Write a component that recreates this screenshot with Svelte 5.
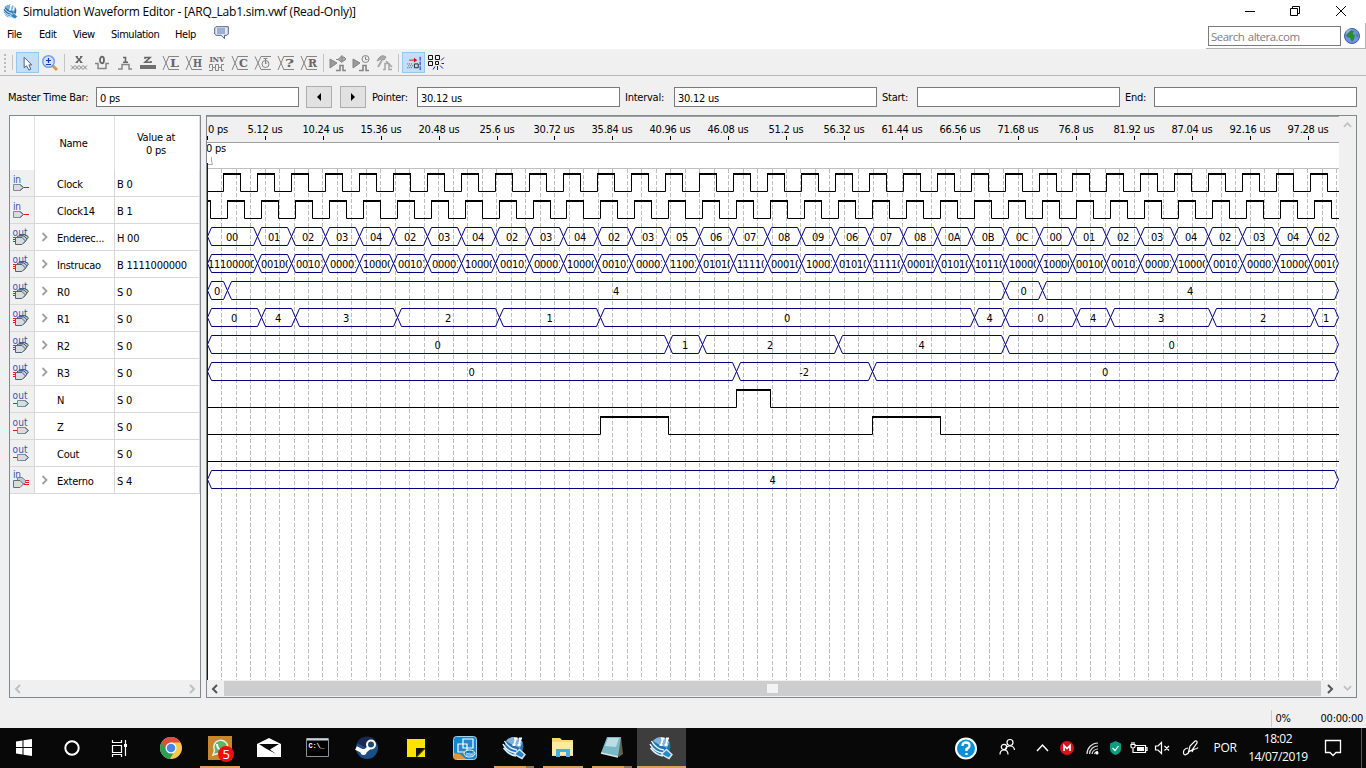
<script>
  const menus = [
    { t: 'File', w: 32 }, { t: 'Edit', w: 34 }, { t: 'View', w: 38 },
    { t: 'Simulation', w: 64 }, { t: 'Help', w: 38 }
  ];
  const tools = ['x', '0', '1', 'z', 'L', 'H', 'inv', 'C', 'clk', '?', 'R'];

  const signals = [
    { name: 'Clock', value: 'B 0', dir: 'in', bus: false },
    { name: 'Clock14', value: 'B 1', dir: 'in', bus: false },
    { name: 'Enderec...', value: 'H 00', dir: 'out', bus: true },
    { name: 'Instrucao', value: 'B 1111000000', dir: 'out', bus: true },
    { name: 'R0', value: 'S 0', dir: 'out', bus: true },
    { name: 'R1', value: 'S 0', dir: 'out', bus: true },
    { name: 'R2', value: 'S 0', dir: 'out', bus: true },
    { name: 'R3', value: 'S 0', dir: 'out', bus: true },
    { name: 'N', value: 'S 0', dir: 'out', bus: false },
    { name: 'Z', value: 'S 0', dir: 'out', bus: false },
    { name: 'Cout', value: 'S 0', dir: 'out', bus: false },
    { name: 'Externo', value: 'S 4', dir: 'in', bus: true }
  ];

  // The plot starts at X0 in time-axis pixels and ends at END.
  const X0 = 207;
  const END = 1338;

  const marks = ['0 ps', '5.12 us', '10.24 us', '15.36 us', '20.48 us', '25.6 us', '30.72 us', '35.84 us', '40.96 us', '46.08 us', '51.2 us', '56.32 us', '61.44 us', '66.56 us', '71.68 us', '76.8 us', '81.92 us', '87.04 us', '92.16 us', '97.28 us']
    .map((t, i) => ({ t, x: Math.floor(i * 57.94 + 0.3) }));

  const grid = Array.from({ length: 78 }, (_, i) => Math.floor((i + 1) * 14.485 + 0.1));

  const clockRise = Array.from({ length: 33 }, (_, k) => (k < 24 ? 223 + 34 * k : k === 24 ? 1039 : 1072 + 34 * (k - 25)));
  const clock14Rise = Array.from({ length: 33 }, (_, k) => (k < 10 ? 227 + 34 * k : 566 + 34 * (k - 10)));

  function digital(pulses, row) {
    const lo = row * 27 + 75.5;
    const hi = lo - 17.5;
    let d = `M0 ${lo}`;
    const highs = [];
    for (const [a, b] of pulses) {
      const l = a - X0 + 0.5;
      const r = Math.min(b, END + 4) - X0 + 0.5;
      d += `H${l}V${hi}H${r}V${lo}`;
      highs.push([l - 0.5, r + 0.5, hi]);
    }
    d += `H${END - X0 + 1}`;
    return { d, highs };
  }

  const digitals = [
    digital(clockRise.map((x) => [x, x + 17]), 0),
    digital([[205, 210], ...clock14Rise.map((x) => [x, x + 17])], 1),
    digital([[736, 770]], 8),
    digital([[600, 668], [872, 940]], 9),
    digital([], 10)
  ];

  const addresses = '00 01 02 03 04 02 03 04 02 03 04 02 03 05 06 07 08 09 06 07 08 0A 0B 0C 00 01 02 03 04 02 03 04 02'.split(' ');
  const codes = '11100000 00100 00101 00001 10000 00101 00001 10000 00101 00001 10000 00101 00001 11001 01010 11110 00010 10001 01010 11110 00010 01010 10110 10000 10000 00100 00101 00001 10000 00101 00001 10000 0010'.split(' ');

  const bounds = [X0, ...clockRise.slice(1), END];
  const segs = (edges, labels) => labels.map((t, i) => ({ a: edges[i], b: edges[i + 1], t }));

  const buses = [
    { row: 2, s: segs(bounds, addresses) },
    { row: 3, s: segs(bounds, codes), clip: true },
    { row: 4, s: segs([X0, 227, 1005, 1042, END], ['0', '4', '0', '4']) },
    { row: 5, s: segs([X0, 261, 295, 397, 499, 600, 974, 1005, 1076, 1110, 1212, 1314, END], ['0', '4', '3', '2', '1', '0', '4', '0', '4', '3', '2', '1']) },
    { row: 6, s: segs([X0, 668, 702, 838, 1005, END], ['0', '1', '2', '4', '0']) },
    { row: 7, s: segs([X0, 736, 872, END], ['0', '-2', '0']) },
    { row: 11, s: segs([X0, END], ['4']) }
  ];

  function hex(s, row) {
    const t = row * 27 + 57.5;
    const b = t + 18;
    const l = s.a - X0 + 0.5;
    const r = s.b - X0 + 0.5;
    return `M${l} ${t + 9}L${l + 4} ${t}H${r - 4}L${r} ${t + 9}L${r - 4} ${b}H${l + 4}Z`;
  }

  const apps = ['start', 'cortana', 'tasks', 'chrome', 'whats', 'mail', 'cmd', 'steam', 'note', 'intel', 'quartus', 'folder', 'notepad', 'quartus'];
  const running = [4, 10, 11, 12, 13];
  const tray = [['help', 40], ['people', 42], ['up', 28], ['mega', 24], ['wifi', 24], ['shield', 23], ['battery', 24], ['mute', 24], ['pen', 30]];
</script>

{#snippet quartus(size)}
  <svg width={size} height={size} viewBox="0 0 24 24">
    <circle cx="12" cy="10.500" r="9.500" fill="#2673b4" />
    <path d="M4 5A10 10 0 0 1 20.500 6L18 12 9 8Z" fill="#7fb3da" />
    <path d="M1 8Q5 16 14 17M1.500 12Q7 19 14 20M2.500 5Q7 13 15 14" stroke="#e8f3fb" stroke-width="1.500" fill="none" />
    <path d="M12 2.500H15.500M14 2.500L12 9M10.500 9H13.500M17 2.500H20M18.500 2.500L17 9M15.500 9H18.500" stroke="#fff" stroke-width="1.800" fill="none" />
    <path d="M12.500 18L17.500 13.500 23 18.500 20 22.500 16 20.500Z" fill="#2788c9" stroke="#dbe5ec" stroke-width="1.400" />
  </svg>
{/snippet}

{#snippet port(s)}
  <svg width="24" height="26" viewBox="0 0 24 26">
    {#if s.dir === 'in' && s.bus}
      <text x="3" y="11" class="io" textLength="8">in</text>
      <path d="M14 13.500H19M14 15.500H19M14 17.500H19" stroke="#e01818" />
      <path d="M7.500 10.500H12L15.500 13.500V16L12 18H7.500Z" fill="#bfcbd3" stroke="#6f8290" />
      <path d="M3.500 13.500H10L13.500 17 10 20.500H3.500Z" fill="#d9dcdd" stroke="#5d7180" />
    {:else if s.dir === 'in'}
      <text x="3" y="13" class="io" textLength="8">in</text>
      <path d="M14 17.500H19" stroke="#e01818" />
      <path d="M3.500 14.500H10L13.500 17.500 10 20.500H3.500Z" fill="#d9dcdd" stroke="#7d8b96" />
      <path d="M10 14.500L13.500 17.500 10 20.500" fill="none" stroke="#486477" />
    {:else if s.bus}
      <path d="M3 13.500H8M3 15.500H7M3 17.500H6" stroke="#e01818" />
      <path d="M9.500 10.500H15L18.500 13 15 17.500H9.500Z" fill="#b9c4cc" stroke="#4e6474" />
      <path d="M7.500 12H14L17 15 14 19H7.500Z" fill="#c9d0d5" stroke="#4e6474" />
      <path d="M5.500 13.500H12L15.500 17 12 20.500H5.500Z" fill="#d9dcdd" stroke="#4e6474" />
      <text x="2.500" y="12" class="io" textLength="15">out</text>
    {:else}
      <text x="2.500" y="13" class="io" textLength="15">out</text>
      <path d="M3 17.500H7" stroke="#e01818" />
      <path d="M7.500 14.500H15L18.500 17.500 15 20.500H7.500Z" fill="#d9dcdd" stroke="#7d8b96" />
      <path d="M15 14.500L18.500 17.500 15 20.500" fill="none" stroke="#486477" />
    {/if}
  </svg>
{/snippet}

{#snippet tool(k)}
  <svg width="20" height="20" viewBox="0 0 20 20" fill="none" stroke="#858585">
    {#if k === 'x'}
      <path d="M2 12.500L6 16.500M2 16.500L6 12.500L10 16.500L14 12.500L18 16.500M6 16.500L10 12.500L14 16.500L18 12.500" />
      <path d="M7.500 4L12.500 9.500M12.500 4L7.500 9.500" stroke="#666" stroke-width="1.700" />
      <path d="M6.500 3.500H9M11 3.500H13.500M6.500 9.500H9M11 9.500H13.500" stroke="#666" />
    {:else if k === '0'}
      <path d="M3 10.500H6V15.500H14V10.500H17" stroke-width="1.500" />
      <ellipse cx="10" cy="7" rx="2" ry="3.300" stroke="#666" stroke-width="1.800" />
    {:else if k === '1'}
      <path d="M3 16H7V11.500H14V16H17" stroke-width="1.500" />
      <path d="M8 4.500H10.500V9M8 9.200H13" stroke="#666" stroke-width="1.600" />
    {:else if k === 'z'}
      <path d="M2 14H18" stroke="#707070" stroke-width="4" />
      <path d="M7 6V4.500H12L7 9.300H13V8" stroke="#666" stroke-width="1.600" />
    {:else if k === 'inv'}
      <text x="2.500" y="9" class="glyph" font-size="8" textLength="15">INV</text>
      <path d="M2.500 15V11.500H5.500V14.500H8.500V11.500H11.500V14.500H14.500V11.500H17M2 17.500H5.500V14.500M8.500 14.500V17.500H11.500V14.500M14.500 14.500V17.500H17" />
    {:else if k === 'clk'}
      <path d="M2 3.500L8 16.500H18M2 16.500L8 3.500H18" />
      <circle cx="12.500" cy="11" r="3.500" /><path d="M10.500 5.500H14.500M12.500 5.500V11L14 9.500" />
    {:else if k === 'gate' || k === 'gatet'}
      <path d="M2 6L9 10 2 15Z" fill="#999" />
      <path d="M8 17.500H12V12.500H15V17.500H18" stroke-width="1.600" />
      {#if k === 'gate'}
        <path d="M8 6.500H10L14 2.500V9.500L10 6.500M14 4H16L18 6L16 8H14" fill="#aaa" />
      {:else}
        <circle cx="14.500" cy="6" r="3.500" fill="#eee" /><path d="M14.500 3.500V6.500H16.500" />
      {/if}
    {:else if k === 'hammer'}
      <path d="M3 8Q7 0 12 4L10 7 7 6Z" fill="#aaa" stroke="#999" />
      <path d="M8 7L4 14" stroke-width="2" stroke="#aaa" />
      <path d="M9 16.500H11V10.500H15V16.500H18M12 8L18 14" stroke="#a5a5a5" stroke-width="1.500" />
    {:else}
      <path d="M2 3L8 17M2 17L8 3M8 3.500H18M8 16.500H18" />
      <text x="9" y="14" class="glyph" font-size="11" textLength="9" lengthAdjust="spacingAndGlyphs">{k}</text>
    {/if}
  </svg>
{/snippet}

<div class="screen">
  <header class="titlebar">
    {@render quartus(16)}
    <span class="title">Simulation Waveform Editor - [ARQ_Lab1.sim.vwf (Read-Only)]</span>
    <svg class="winbtns" width="116" height="20" viewBox="0 0 116 20" fill="none" stroke="#000">
      <path d="M3 9.500H13" />
      <path d="M48.500 6.500H55.500V13.500H48.500ZM50.500 6V4.500H57.500V11.500H56" />
      <path d="M94 4L104 14M104 4L94 14" />
    </svg>
  </header>

  <div class="menubar">
    {#each menus as m}<span class="menu" style:width="{m.w}px">{m.t}</span>{/each}
    <svg class="chat" width="15" height="14" viewBox="0 0 15 14">
      <path d="M2 .700H14.300V8L13 9.300H10.500V12.500L7 9.300H2L.700 8V2Z" fill="#dfe8f8" stroke="#54657f" />
      <path d="M3 3H11M3 5H11M3 7H11" stroke="#5876a5" />
    </svg>
    <div class="searchbox">
      <div class="search">Search altera.com</div>
      <svg width="18" height="18" viewBox="0 0 18 18">
        <circle cx="8" cy="9" r="7.500" fill="#6f92e4" stroke="#3f5cab" />
        <circle cx="6" cy="6" r="4" fill="#a9c2f3" opacity=".6" />
        <path d="M2 8L4 6 7 3 10 4 9 7 11 8 10 12 8 15 6 11 3 10ZM12 6L14 8 13 11Z" fill="#2f8b33" />
      </svg>
    </div>
  </div>

  <div class="toolbar">
    <svg width="16" height="22" viewBox="0 0 16 22"><path d="M5 2V20" stroke="#bbb" stroke-width="2" stroke-dasharray="2 2" /><path d="M12.500 3V18" stroke="#c4c4c4" /></svg>
    <div class="cell on">
      <svg width="20" height="20" viewBox="0 0 20 20"><path d="M7 4.500V15.500L9.500 13.500 12 18 14 17 12 12.500H15Z" fill="#fff" stroke="#465a83" /></svg>
    </div>
    <div class="cell">
      <svg width="20" height="20" viewBox="0 0 20 20">
        <path d="M12.500 12.500L17 17" stroke="#d79a43" stroke-width="3" />
        <circle cx="8.500" cy="8.500" r="5.800" fill="#cfe3fb" stroke="#7ba0d8" stroke-width="1.500" />
        <path d="M6 7.500H11M8.500 5V10M6 11.500H11" stroke="#1634b5" stroke-width="1.200" />
      </svg>
    </div>
    <i class="sep"></i>
    {#each tools as k}<div class="cell">{@render tool(k)}</div>{/each}
    <i class="sep"></i>
    {#each ['gate', 'gatet', 'hammer'] as k}<div class="cell">{@render tool(k)}</div>{/each}
    <i class="sep"></i>
    <div class="cell on">
      <svg width="20" height="20" viewBox="0 0 20 20" fill="none" stroke="#222">
        <path d="M6 7.500H13" stroke="#e01010" /><path d="M11 5L14.500 7.500 11 10Z" fill="#e01010" stroke="none" />
        <path d="M4 11.500H10M5 13.500H10M4 15.500H10" stroke="#555" stroke-dasharray="1 1" /><path d="M11.500 11.500H15.500V15.500H11.500Z" />
        <path d="M17.500 4V18" stroke="#1010f0" stroke-dasharray="4 1" />
      </svg>
    </div>
    <div class="cell">
      <svg width="20" height="20" viewBox="0 0 20 20" fill="none" stroke="#111">
        <path d="M2.500 2.500H6.500V6.500H2.500ZM9.500 2.500H13.500V6.500H9.500ZM2.500 8.500H6.500V12.500H2.500ZM9.500 8.500H12.500V11.500H9.500Z" />
        <path d="M15 7.500L18 4.500M15.500 10.500H18M14 12.500L17 15.500M11.500 13V17M9 13.500L7 16.500" stroke="#1515e8" />
      </svg>
    </div>
  </div>

  <div class="fields">
    <label style:width="88px">Master Time Bar:</label><div class="field">0 ps</div>
    <div class="step s1"><svg width="6" height="8" viewBox="0 0 6 8"><path d="M5 0V8L1 4Z" /></svg></div>
    <div class="step s2"><svg width="6" height="8" viewBox="0 0 6 8"><path d="M1 0V8L5 4Z" /></svg></div>
    <label style:width="45px">Pointer:</label><div class="field">30.12 us</div>
    <label class="gap" style:width="49px">Interval:</label><div class="field">30.12 us</div>
    <label class="gap" style:width="35px">Start:</label><div class="field"></div>
    <label class="gap" style:width="29px">End:</label><div class="field"></div>
  </div>

  <main>
    <section class="names">
      <div class="head"><span></span><span>Name</span><span class="two">Value at<br />0 ps</span></div>
      {#each signals as s}
        <div class="row">
          <span class="ic">{@render port(s)}</span>
          <span class="nm">
            <svg width="8" height="10" viewBox="0 0 8 10">{#if s.bus}<path d="M1.500 1L5.500 5 1.500 9" fill="none" stroke="#a0a0a0" stroke-width="1.800" />{/if}</svg>
            {s.name}
          </span>
          <span class="vl">{s.value}</span>
        </div>
      {/each}
      <div class="hscroll dim">
        <svg width="8" height="10" viewBox="0 0 8 10"><path d="M6 1L2 5 6 9" /></svg>
        <svg width="8" height="10" viewBox="0 0 8 10"><path d="M2 1L6 5 2 9" /></svg>
      </div>
    </section>

    <section class="waves">
      <svg class="plot" width="1132" height="564" viewBox="0 0 1132 564">
        <defs>
          {#each buses[1].s as s, i}
            <clipPath id="c{i}"><rect x={s.a - X0 + 2} y="140" width={s.b - s.a - 5} height="16" /></clipPath>
          {/each}
        </defs>
        <rect width="1132" height="26" fill="#f0f0f0" />
        <path d="M0 .500H1132M0 26.500H1132" stroke="#a0a0a0" />
        <path d="M0 52.500H1132" stroke="#c0c0c0" />
        {#each marks as m, i}
          <text x={i ? m.x : 1} y="17" text-anchor={i ? 'middle' : 'start'}>{m.t}</text>
          <path d="M{m.x + 0.5} 20V24" stroke="#000" />
        {/each}
        <text x="-1" y="36">0 ps</text>
        <path d="M4.500 41V45L5.500 48.500H1" fill="none" stroke="#aaa" />
        {#each grid as x}
          <path d="M{x + 0.5} 53V564" stroke="#bdbdbd" stroke-dasharray="4 2" />
        {/each}
        {#each digitals as w}
          <path d={w.d} fill="none" stroke="#000" />
          {#each w.highs as h}<path d="M{h[0]} {h[2]}H{h[1]}" stroke="#000" stroke-width="2" />{/each}
        {/each}
        {#each buses as b}
          {#each b.s as s, i}
            <path d={hex(s, b.row)} fill="none" stroke="#000080" />
            {#if b.clip}
              <g clip-path="url(#c{i})"><text x={s.a - X0 + (i === 0 ? 1 : s.t.endsWith('1') ? 5 : 4)} y={b.row * 27 + 71} class="code">{s.t}</text></g>
            {:else}
              <text x={(s.a + s.b) / 2 - X0} y={b.row * 27 + 71} text-anchor="middle">{s.t}</text>
            {/if}
          {/each}
        {/each}
        <path d="M.500 47V564" stroke="#0000e0" />
      </svg>
      <div class="vscroll">
        <svg width="9" height="8" viewBox="0 0 10 8"><path d="M1 6L5 2 9 6" /></svg>
        <svg width="9" height="8" viewBox="0 0 10 8"><path d="M1 2L5 6 9 2" /></svg>
      </div>
      <div class="hscroll">
        <svg width="8" height="10" viewBox="0 0 8 10"><path d="M6 1L2 5 6 9" /></svg>
        <div class="thumb"><i></i></div>
        <svg width="8" height="10" viewBox="0 0 8 10"><path d="M2 1L6 5 2 9" /></svg>
      </div>
    </section>
  </main>

  <footer class="status"><span class="pct">0%</span><span>00:00:00</span></footer>

  <nav class="taskbar">
    {#each apps as a, i}
      <div class="app" class:active={i === 13} class:run={running.includes(i)} class:multi={i === 10 || i === 12}>
        {#if a === 'quartus'}
          {@render quartus(24)}
        {:else}
          <svg width="26" height="26" viewBox="0 0 26 26">
            {#if a === 'start'}
              <path d="M5 6.500L11.500 5.500V12H5ZM12.500 5.300L21 4V12H12.500ZM5 13H11.500V19.500L5 18.500ZM12.500 13H21V21L12.500 19.700Z" fill="#fff" />
            {:else if a === 'cortana'}
              <circle cx="12" cy="13" r="6.700" fill="none" stroke="#fff" stroke-width="2" />
            {:else if a === 'tasks'}
              <path d="M3.500 5V7.500H12.500V5M3.500 10.500H12.500V17.500H3.500ZM3.500 22V19.500H12.500V22M16.500 5V21" fill="none" stroke="#fff" stroke-width="1.200" /><path d="M15 9H18V12H15Z" fill="#fff" />
            {:else if a === 'chrome'}
              <circle cx="13" cy="13" r="11" fill="#f7c94b" />
              <path d="M13 13L3.500 7.500A11 11 0 0 0 12 24L17 15Z" fill="#2c9f57" />
              <path d="M3.500 7.500A11 11 0 0 1 22.500 7.500H13L8 14Z" fill="#dc4d42" />
              <circle cx="13" cy="13" r="5.500" fill="#fff" /><circle cx="13" cy="13" r="4.300" fill="#4488ee" />
            {:else if a === 'whats'}
              <path d="M1 1H25V25H1Z" fill="#c88729" />
              <path d="M6 20L7.500 15.500A7 7 0 1 1 10.500 18.500Z" fill="#5bb965" stroke="#e8efe3" stroke-width="1.500" />
              <path d="M10 9Q10 15 16 15" stroke="#fff" stroke-width="2" fill="none" />
            {:else if a === 'mail'}
              <path d="M1 9L13 3 25 9V22H1Z" fill="#fff" /><path d="M3 9H23L14 14.500 20 19 9 13Z" fill="#080808" />
            {:else if a === 'cmd'}
              <path d="M1.500 3.500H23.500V21.500H1.500Z" fill="#000" stroke="#8a9299" /><path d="M2 4.500H23" stroke="#c7d2dc" stroke-width="2" />
              <text x="3.500" y="12.500" fill="#fff" font-size="7" font-weight="bold" font-family="Liberation Mono">C:\_</text>
            {:else if a === 'steam'}
              <circle cx="13" cy="13" r="11" fill="#1a4f85" /><path d="M3 8A11 11 0 0 1 23 8L17 15Z" fill="#1a2850" />
              <path d="M2 13L10 17 16 12" stroke="#fff" stroke-width="4" fill="none" /><circle cx="17" cy="9.500" r="4" fill="#234572" stroke="#fff" stroke-width="2" /><circle cx="9.500" cy="17" r="3" fill="#fff" />
            {:else if a === 'note'}
              <path d="M4 4H22V13L13 22H4Z" fill="#ffe300" /><path d="M13 22V13H22Z" fill="#111" /><path d="M14 22H22V14Z" fill="#ffe300" />
            {:else if a === 'intel'}
              <rect x="1.500" y="1.500" width="23" height="23" rx="3" fill="#1387cf" stroke="#9fd4f3" />
              <path d="M2 18L8 19 14 24H2Z" fill="#dc963c" />
              <path d="M11 4H21V13H11ZM6 9H15V17H6Z" fill="#2688c7" stroke="#fff" stroke-width="1.200" />
              <ellipse cx="17.500" cy="18.500" rx="5.500" ry="3.500" fill="#1278bd" stroke="#fff" /><text x="13.500" y="20.500" font-size="6" fill="#fff" font-family="Open Sans">intel</text>
            {:else if a === 'folder'}
              <path d="M2 3H10L12 5H23V21H2Z" fill="#f8d775" /><path d="M2 7H23V20H2Z" fill="#ffe9a3" /><path d="M6 22V14H20V22H16V17H10V22Z" fill="#43afe4" />
            {:else if a === 'notepad'}
              <path d="M8 2H22L24 19 20 22Z" fill="#64614b" /><path d="M8 2H22L19 22 2 18Z" fill="#79b8c4" /><path d="M9 3H20L17 12 6 11Z" fill="#b9dfe5" /><path d="M2 18L19 22" stroke="#dce8e7" stroke-width="1.500" />
            {/if}
          </svg>
          {#if a === 'whats'}<b class="badge">5</b>{/if}
        {/if}
      </div>
    {/each}
    <div class="spacer"></div>
    {#each tray as [k, w]}
      <div class="tray" style:width="{w}px">
        <svg width="24" height="24" viewBox="0 0 24 24" fill="none" stroke="#fff" stroke-width="1.200">
          {#if k === 'help'}
            <circle cx="12" cy="12.500" r="10" fill="#0b90d8" stroke-width="2" /><path d="M8.500 10Q8.500 6.500 12 6.500T15.500 9.700Q15.500 11.500 12.500 13V15M12.500 17V19" stroke-width="2.300" />
          {:else if k === 'people'}
            <circle cx="15" cy="6.500" r="3" /><path d="M10 14Q11 10 15 10T19.500 14" /><circle cx="9" cy="11" r="2.700" /><path d="M5 18.500Q5 14 9 14T13 18.500" />
          {:else if k === 'up'}
            <path d="M7 15L12.500 9 18 15" stroke-width="1.500" />
          {:else if k === 'mega'}
            <circle cx="11" cy="12" r="7" fill="#dc1119" stroke="none" /><path d="M8 15V9.500L11 12.500 14 9.500V15" stroke-width="1.700" />
          {:else if k === 'wifi'}
            <path d="M7 18A11 11 0 0 1 18 7M9.500 18A8.500 8.500 0 0 1 18 10M12 18A6 6 0 0 1 18 13M14.500 18A3.500 3.500 0 0 1 18 15.500" stroke="#ddd" /><circle cx="17" cy="17" r="1.500" fill="#fff" stroke="none" />
          {:else if k === 'shield'}
            <path d="M11.500 5L17 7.500V13Q17 17 11.500 19 6 17 6 13V7.500Z" fill="#0a9d80" stroke="none" /><path d="M8.500 12L11 14.500 14.500 10" />
          {:else if k === 'battery'}
            <path d="M8.500 9.500H18.500V16.500H8.500M18.500 11.500H20V14.500H18.500M4 8.500H8V10.500Q8 12 6 12T4 10.500ZM5 6V8M7 6V8M6 12V16.500H9" /><path d="M10 11H17V15H10Z" fill="#fff" stroke="none" />
          {:else if k === 'mute'}
            <path d="M4.500 10H7L10.500 6.500V17.500L7 14H4.500ZM13.500 10L18 14.500M18 10L13.500 14.500" />
          {:else}
            <path d="M10.500 16L12 10 17 5Q19.500 4.500 19 7L14 14ZM10 12Q5 13 5.500 17T11 16.500M14 16Q15 13 17 13T20 11.500" />
          {/if}
        </svg>
      </div>
    {/each}
    <span class="lang">POR</span>
    <span class="clock">18:02<br />14/07/2019</span>
    <svg class="notif" width="50" height="40" viewBox="0 0 50 40" fill="none" stroke="#fff" stroke-width="1.300"><path d="M14.500 12.500H29.500V24.500H25L22 27.500 19 24.500H14.500Z" /></svg>
    <i class="peek"></i>
  </nav>
</div>

<style>
  :global(body) { margin: 0; background: #f0f0f0; overflow: hidden; }
  .screen { width: 1366px; height: 768px; display: flex; flex-direction: column; background: #f0f0f0; color: #000; font: 11px 'DejaVu Sans Condensed', 'DejaVu Sans', sans-serif; font-stretch: condensed; letter-spacing: -.25px; white-space: nowrap; overflow: hidden; }
  .screen * { box-sizing: border-box; }
  svg { display: block; flex: none; }
  .titlebar { height: 23px; background: #fff; display: flex; align-items: center; padding-left: 2px; }
  .title { margin-left: 5px; font: 12px 'Open Sans', sans-serif; letter-spacing: -.21px; flex: 1; }
  .winbtns { margin-right: 8px; }
  .menubar { height: 26px; background: #fff; display: flex; padding-left: 7px; }
  .menu { line-height: 23px; letter-spacing: -.45px; }
  .chat { margin-top: 3px; margin-left: 1px; }
  .searchbox { margin-left: auto; margin-right: 0; width: 160px; height: 26px; display: flex; align-items: center; border-right: 1px solid #b0b0b0; border-bottom: 1px solid #b0b0b0; gap: 3px; padding-left: 2px; }
  .search { width: 133px; height: 20px; border: 1px solid #7a7a7a; color: #808080; padding-left: 2px; font: 11.5px/20px 'Open Sans', sans-serif; letter-spacing: -.52px; word-spacing: 1px; }
  .toolbar { height: 27px; border-top: 1px solid #f4f4f4; border-bottom: 1px solid #b8b8b8; display: flex; align-items: flex-start; padding-top: 2px; }
  .cell { width: 23px; height: 21px; padding: 1px 0 0 1px; }
  .cell.on { background: #c2dff6; border: 1px solid #90c8f6; padding: 0; }
  .cell.on svg { height: 19px; overflow: hidden; }
  .sep { width: 1px; height: 18px; background: #c4c4c4; margin: 2px 3px 0 2px; }
  .glyph { fill: #666; stroke: none; font-family: 'DejaVu Serif', serif; font-weight: bold; letter-spacing: 0; }
  .fields { height: 39px; padding: 10px 0 0 8px; display: flex; align-items: flex-start; }
  .fields label { line-height: 23px; }
  .gap { margin-left: 5px; }
  .field { width: 203px; height: 20px; margin-top: 1px; background: #fff; border: 1px solid #7a7a7a; padding-left: 3px; line-height: 21px; }
  .step { width: 26px; height: 22px; background: #e1e1e1; border: 1px solid #adadad; display: grid; place-items: center; }
  .s1 { margin-left: 7px; margin-right: 8px; }
  .s2 { margin-right: 6px; }
  main { display: flex; height: 583px; padding-left: 9px; gap: 5px; }
  .names { width: 192px; border: 1px solid #828790; background: #fff; display: flex; flex-direction: column; }
  .head, .row { display: grid; grid-template-columns: 25px 80px 85px; }
  .head { height: 54px; text-align: center; line-height: 13px; }
  .head span { display: grid; place-content: center; border-right: 1px solid #e0e0e0; padding-right: 2px; }
  .head .two { padding-top: 2px; }
  .row { height: 27px; }
  .row span { border-right: 1px solid #d8d8d8; border-bottom: 1px solid #d8d8d8; height: 27px; }
  .ic { background: #f0f0f0; }
  .row .nm { display: flex; align-items: flex-start; gap: 8px; padding: 0 0 0 6px; line-height: 30px; }
  .nm svg { margin-top: 8px; }
  .row .vl { padding-left: 2px; line-height: 30px; }
  .io { font-size: 10px; fill: #3056b0; letter-spacing: 0; }
  .hscroll { height: 17px; background: #f0f0f0; display: flex; align-items: center; justify-content: space-between; padding: 0 4px; margin-top: auto; }
  .hscroll path { fill: none; stroke: #555; stroke-width: 2; }
  .dim path, .vscroll path { fill: none; stroke: #c0c0c0; stroke-width: 2; }
  .waves { width: 1151px; border: 1px solid #828790; background: #fff; display: grid; grid-template-columns: 1132px 17px; grid-template-rows: 564px 17px; }
  .waves .hscroll { grid-column: 1; margin: 0; padding-right: 5px; }
  .plot { height: 564px; overflow: hidden; }
  .plot text { font-size: 11px; fill: #000; }
  .plot .code { letter-spacing: -.3px; }
  .vscroll { grid-row: 1 / 3; grid-column: 2; background: #f0f0f0; display: flex; flex-direction: column; align-items: center; justify-content: space-between; padding: 5px 0; }
  .thumb { width: 1097px; height: 15px; background: #cdcdcd; display: grid; place-items: center; }
  .thumb i { width: 11px; height: 9px; background: #f3f3f3; }
  .status { height: 30px; display: flex; align-items: center; justify-content: flex-end; padding: 10px 3px 0 0; }
  .pct { width: 50px; height: 17px; line-height: 17px; border-left: 1px solid #c9c9c9; padding-left: 4px; }
  .taskbar { height: 40px; background: #080808; color: #fff; display: flex; align-items: stretch; }
  .app { width: 49px; display: grid; place-items: center; position: relative; padding-right: 1px; }
  .active { background: #3d3d3d; }
  .run::after { content: ''; position: absolute; left: 4px; right: 5px; bottom: 0; height: 2px; background: #d9a05f; }
  .multi::after { border-right: 8px solid #9b7448; }
  .active::after { left: 0; right: 0; }
  .badge { position: absolute; left: 22px; top: 18px; width: 16px; height: 16px; border-radius: 50%; background: #f00c0c; font: 13px/16px 'Open Sans', sans-serif; text-align: center; }
  .spacer { flex: 1; }
  .tray { display: grid; place-items: center; }
  .lang { width: 40px; text-align: center; font: 12px/39px 'Open Sans', sans-serif; letter-spacing: -.3px; }
  .clock { width: 66px; text-align: center; font: 12px/18px 'Open Sans', sans-serif; letter-spacing: -.4px; padding-top: 2px; }
  .peek { width: 5px; border-left: 1px solid #555; }
</style>
